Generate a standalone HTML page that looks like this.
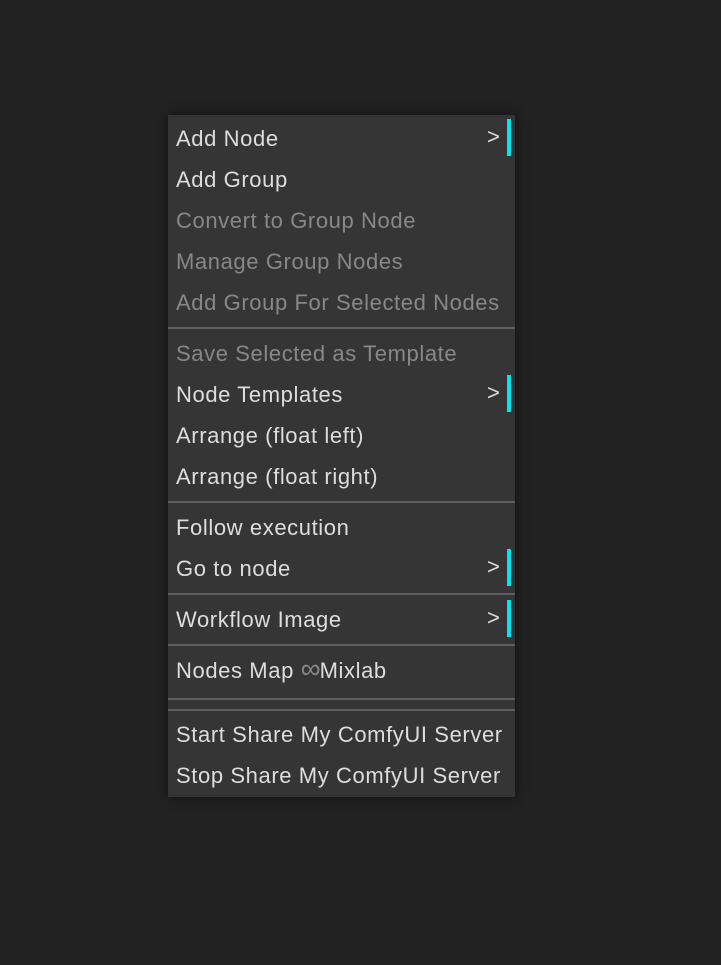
<!DOCTYPE html>
<html><head><style>
html,body{margin:0;padding:0;background:#222;width:721px;height:965px;overflow:hidden}
#m{position:absolute;left:168px;top:115px;width:347px;height:682px;background:#353535;box-shadow:0 0 10px rgba(0,0,0,.6)}
.i{position:absolute;left:8px;font:22px "Liberation Sans",sans-serif;color:#ddd;white-space:nowrap;line-height:26px;letter-spacing:0.6px}
.d{color:#888}
.s{position:absolute;left:0;width:347px;height:2px;background:#5f5f5f}
.a{position:absolute;left:319px;font:22px "Liberation Sans",sans-serif;color:#ddd;line-height:26px}
.b{position:absolute;left:339px;width:4px;height:37px;background:#00e5f0}
</style></head><body>
<div id="m">
<div class="i" style="top:11px">Add Node</div><div class="a" style="top:9px">&gt;</div><div class="b" style="top:4px"></div>
<div class="i" style="top:52px">Add Group</div>
<div class="i d" style="top:93px">Convert to Group Node</div>
<div class="i d" style="top:134px">Manage Group Nodes</div>
<div class="i d" style="top:175px">Add Group For Selected Nodes</div>
<div class="s" style="top:212px"></div>
<div class="i d" style="top:226px">Save Selected as Template</div>
<div class="i" style="top:267px">Node Templates</div><div class="a" style="top:265px">&gt;</div><div class="b" style="top:260px"></div>
<div class="i" style="top:308px">Arrange (float left)</div>
<div class="i" style="top:349px">Arrange (float right)</div>
<div class="s" style="top:386px"></div>
<div class="i" style="top:400px">Follow execution</div>
<div class="i" style="top:441px">Go to node</div><div class="a" style="top:439px">&gt;</div><div class="b" style="top:434px"></div>
<div class="s" style="top:478px"></div>
<div class="i" style="top:492px">Workflow Image</div><div class="a" style="top:490px">&gt;</div><div class="b" style="top:485px"></div>
<div class="s" style="top:529px"></div>
<div class="i" style="top:543px;height:26px">Nodes Map <span style="color:#888;font-size:28px;line-height:20px;letter-spacing:-1px">∞</span>Mixlab</div>
<div class="s" style="top:583px"></div>
<div class="s" style="top:594px"></div>
<div class="i" style="top:607px">Start Share My ComfyUI Server</div>
<div class="i" style="top:648px">Stop Share My ComfyUI Server</div>
</div>
</body></html>
